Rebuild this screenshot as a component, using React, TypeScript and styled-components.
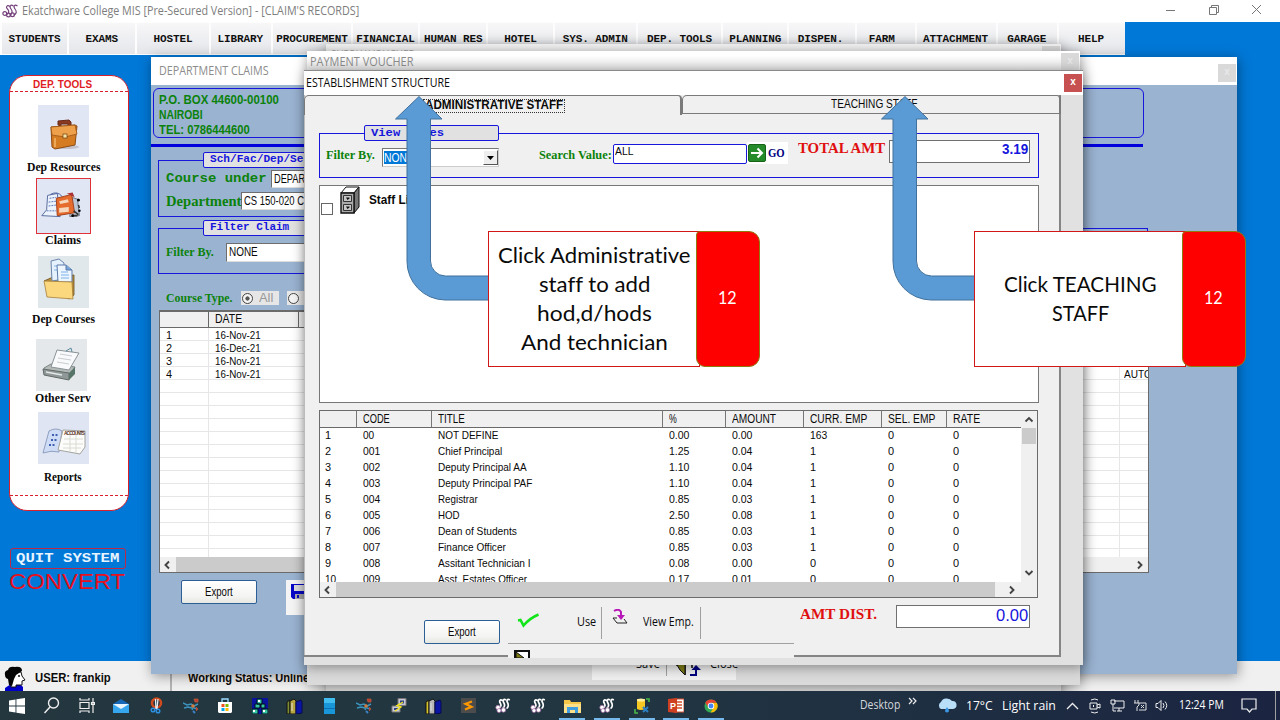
import React, { useLayoutEffect, useRef, useState } from "react";
import styled, { createGlobalStyle, css } from "styled-components";

const ui = '"Open Sans", "Noto Sans", sans-serif';
const sans = '"Liberation Sans", Arial, sans-serif';
const serif = '"Liberation Serif", "Times New Roman", serif';
const mono = '"Liberation Mono", "Courier New", monospace';
const calibri = 'Lato, "Open Sans", sans-serif';
const blue = "#1616dc";
const green = "#0b820b";

const Global = createGlobalStyle`
  * { box-sizing: border-box; }
  body { margin: 0; background: #0078d7; overflow: hidden; }
`;

/* ---------- text ---------- */
type Face = { $font?: string; $size?: number; $bold?: boolean; $color?: string };
const face = css<Face>`
  font-family: ${(p) => p.$font ?? sans};
  font-size: ${(p) => p.$size ?? 12}px;
  font-weight: ${(p) => (p.$bold ? 700 : 400)};
  font-variant-ligatures: none;
  color: ${(p) => p.$color ?? "#0a0a0a"};
  white-space: pre;
`;
const TextSlot = styled.span<Face>`
  ${face}
  display: block;
  flex: none;
  line-height: 1.2;
`;
const TextRun = styled.span`
  display: inline-block;
  transform-origin: 0 50%;
`;
type LabelProps = { w: number; font?: string; size?: number; bold?: boolean; color?: string; children: string };

/* Text condensed or widened to the width of the original bitmap face. */
function Label({ w, font, size, bold, color, children }: LabelProps) {
  const ref = useRef<HTMLSpanElement>(null);
  const [scale, setScale] = useState(1);
  useLayoutEffect(() => {
    if (ref.current && ref.current.offsetWidth) setScale(w / ref.current.offsetWidth);
  }, [w, children]);
  return (
    <TextSlot $font={font} $size={size} $bold={bold} $color={color} style={{ width: w }}>
      <TextRun ref={ref} style={{ transform: `scaleX(${scale})` }}>{children}</TextRun>
    </TextSlot>
  );
}

/* ---------- shell ---------- */
const Screen = styled.div`
  position: relative;
  width: 1280px;
  height: 720px;
  display: flex;
  flex-direction: column;
  overflow: hidden;
  background: #0078d7;
`;
const AppTitle = styled.header`
  height: 22px;
  display: flex;
  align-items: center;
  gap: 3px;
  padding-left: 2px;
  background: #fff;
`;
const Controls = styled.div`
  margin-left: auto;
  display: flex;
  gap: 31px;
  padding: 0 17px 2px 0;
`;
const MenuBar = styled.nav`
  width: 1125px;
  height: 33px;
  margin-bottom: -1px;
  display: flex;
  padding-left: 2px;
  gap: 2px;
  background: #fdfdfd;
`;
const MenuItem = styled.div<{ $w: number; $pull: number }>`
  width: ${(p) => p.$w}px;
  height: 31px;
  margin-top: 1px;
  padding-right: ${(p) => p.$pull}px;
  display: flex;
  align-items: center;
  justify-content: center;
  font: 700 11px ${mono};
  letter-spacing: -0.1px;
  color: #111;
  background: linear-gradient(#f7f7f8, #e4e6ea);
`;
const Workspace = styled.main`
  flex: 1;
  display: flex;
  flex-direction: column;
  align-items: flex-start;
  padding: 21px 0 0 9px;
`;
const ToolPanel = styled.aside`
  width: 120px;
  height: 436px;
  display: flex;
  flex-direction: column;
  align-items: center;
  border: 1px solid #d8202c;
  border-radius: 18px;
  background: #fff;
  padding-top: 2px;
`;
const PanelHeading = styled.div`
  width: 100%;
  height: 14px;
  display: flex;
  justify-content: center;
  padding-right: 13px;
  border-bottom: 1px dashed #d8202c;
`;
const Tool = styled.div<{ $top: number; $gap: number; $active?: boolean; $nudge?: number }>`
  display: flex;
  flex-direction: column;
  align-items: center;
  margin-top: ${(p) => p.$top}px;
  margin-left: -12px;
  & > svg {
    display: block;
    width: ${(p) => (p.$active ? 55 : 51)}px;
    height: ${(p) => (p.$active ? 56 : 52)}px;
    border: ${(p) => (p.$active ? "1px solid #e03038" : "none")};
    margin-bottom: ${(p) => p.$gap}px;
    margin-right: ${(p) => p.$nudge ?? 0}px;
  }
`;
const PanelFoot = styled.div`
  width: 100%;
  margin-top: 11px;
  border-top: 1px dashed #d8202c;
`;
const Quit = styled.div`
  width: 116px;
  height: 21px;
  margin: 37px 0 0 1px;
  padding-top: 2px;
  display: flex;
  align-items: center;
  justify-content: center;
  border: 1px solid #c02848;
  border-radius: 3px;
`;
const StatusBar = styled.footer`
  height: 30px;
  display: flex;
  align-items: center;
  background: #f0f0f0;
  padding: 4px 0 0 4px;
`;
const StatusCell = styled.div<{ $w: number }>`
  width: ${(p) => p.$w}px;
  height: 26px;
  display: flex;
  align-items: center;
  gap: 9px;
  border-right: 2px solid #b4b4b4;
`;
const StatusText = styled.div`
  padding-left: 16px;
`;

/* ---------- floating windows ---------- */
const Window = styled.section<{ $x: number; $y: number; $w: number; $h: number; $bg: string }>`
  position: absolute;
  left: ${(p) => p.$x}px;
  top: ${(p) => p.$y}px;
  width: ${(p) => p.$w}px;
  height: ${(p) => p.$h}px;
  display: flex;
  flex-direction: column;
  overflow: hidden;
  background: ${(p) => p.$bg};
  box-shadow: 1px 2px 12px rgba(0, 0, 0, 0.4);
`;
const WindowTitle = styled.div<{ $h: number; $pad: number; $bg?: string; $line?: boolean }>`
  flex: none;
  height: ${(p) => p.$h}px;
  display: flex;
  align-items: center;
  justify-content: space-between;
  padding: 0 1px 0 ${(p) => p.$pad}px;
  background: ${(p) => p.$bg ?? "#fff"};
  border-top: ${(p) => (p.$line ? "1px solid #8a8a8a" : "0")};
`;
const CloseBox = styled.div<{ $on?: boolean; $top?: number }>`
  width: 18px;
  height: 18px;
  margin-top: ${(p) => p.$top ?? 0}px;
  font: 700 10px/16px ${sans};
  text-align: center;
  color: ${(p) => (p.$on ? "#fff" : "#e8e8e8")};
  background: ${(p) => (p.$on ? "#c75050" : "#d9d9d9")};
`;
const Row = styled.div<{ $gap?: number; $top?: number; $left?: number; $align?: string }>`
  display: flex;
  align-items: ${(p) => p.$align ?? "center"};
  gap: ${(p) => p.$gap ?? 0}px;
  margin-top: ${(p) => p.$top ?? 0}px;
  margin-left: ${(p) => p.$left ?? 0}px;
`;
const Address = styled.div`
  width: 991px;
  height: 50px;
  margin: 3px 0 0 2px;
  padding: 4px 0 0 5px;
  border: 1.5px solid ${blue};
  border-radius: 6px;
  display: flex;
  flex-direction: column;
  gap: 0.6px;
  flex: none;
`;
const Rule = styled.div`
  flex: none;
  width: 992px;
  height: 3px;
  margin-top: 6px;
  background: #0000dd;
`;
const Group = styled.div<{ $w: number; $h: number; $top: number; $left: number }>`
  flex: none;
  width: ${(p) => p.$w}px;
  height: ${(p) => p.$h}px;
  margin: ${(p) => p.$top}px 0 0 ${(p) => p.$left}px;
  border: 1px solid ${blue};
`;
const Legend = styled.div<{ $w: number; $left: number }>`
  width: ${(p) => p.$w}px;
  height: 16px;
  margin: -9px 0 0 ${(p) => p.$left}px;
  padding-left: 6px;
  display: flex;
  align-items: center;
  border: 1px solid ${blue};
  border-radius: 2px;
  background: #e1e1e1;
`;
const Field = styled.div<{ $w: number; $h: number }>`
  width: ${(p) => p.$w}px;
  height: ${(p) => p.$h}px;
  flex: none;
  display: flex;
  align-items: center;
  padding-left: 2px;
  background: #fff;
  border: 1px solid #6e6e6e;
  border-right-color: #ddd;
  border-bottom-color: #ddd;
`;
const Chip = styled.div<{ $w: number }>`
  width: ${(p) => p.$w}px;
  height: 14px;
  display: flex;
  align-items: center;
  gap: 6px;
  padding-left: 1px;
  background: #e6e6e6;
`;
const Radio = styled.i<{ $on?: boolean }>`
  width: 11px;
  height: 11px;
  border-radius: 50%;
  border: 1.5px solid #444;
  background: ${(p) => (p.$on ? "radial-gradient(#555 0 1.8px, #f4f4f4 2.4px)" : "#f4f4f4")};
`;
const ClaimsTable = styled.div`
  flex: none;
  width: 990px;
  height: 263px;
  margin: 5px 0 0 8px;
  display: flex;
  flex-direction: column;
  background: #fff;
  border: 1px solid #6b6b6b;
  border-top-width: 2px;
`;
const ClaimsHead = styled.div`
  flex: none;
  height: 16px;
  display: grid;
  grid-template-columns: 49px 90px 1fr;
  background: #f0f0f0;
  border-bottom: 1px solid #696969;
  & > div {
    border-right: 1px solid #666;
    padding: 0 0 0 6px;
    line-height: 1;
  }
`;
const ClaimsBody = styled.div`
  flex: 1;
  min-height: 0;
  overflow: hidden;
`;
const ClaimRow = styled.div`
  height: 13px;
  display: grid;
  grid-template-columns: 49px 911px 1fr;
  border-bottom: 1px solid #e6e6e6;
  & > div {
    border-right: 1px solid #e6e6e6;
    padding-left: 6px;
    line-height: 1;
  }
  & > div:last-child { padding-left: 4px; border: 0; overflow: hidden; }
  & span { line-height: 15px; }
`;
const HScroll = styled.div<{ $end: number }>`
  flex: none;
  height: 15px;
  display: flex;
  align-items: center;
  padding: 0 ${(p) => p.$end}px 0 3px;
  background: #f0f0f0;
  & > svg:last-child { margin-left: auto; }
`;
const Thumb = styled.div<{ $w: number }>`
  width: ${(p) => p.$w}px;
  height: 15px;
  margin-left: 3px;
  background: #cbcbcb;
`;
const Button = styled.div`
  width: 76px;
  height: 24px;
  flex: none;
  display: flex;
  align-items: center;
  justify-content: center;
  border: 1.5px solid #2c5f96;
  border-radius: 2px;
  background: linear-gradient(#fff, #f4f4f2 70%, #e6e6e2);
`;
const SaveStrip = styled.div`
  width: 400px;
  height: 35px;
  margin-left: 29px;
  padding: 4px 0 0 5px;
  background: #f4f4f4;
`;

/* ---------- establishment window ---------- */
const Tabs = styled.div`
  display: flex;
  height: 20px;
  flex: none;
`;
const Tab = styled.div<{ $on?: boolean }>`
  width: ${(p) => (p.$on ? 378 : 379)}px;
  height: ${(p) => (p.$on ? 20 : 19)}px;
  display: flex;
  align-items: center;
  justify-content: ${(p) => (p.$on ? "center" : "flex-start")};
  padding-left: ${(p) => (p.$on ? 2 : 148)}px;
  border: 1px solid #7a7a7a;
  border-right-width: 2px;
  border-bottom-width: ${(p) => (p.$on ? 0 : 1)}px;
  border-radius: 5px 4px 0 0;
  background: #f0f0f0;
`;
const Focus = styled.div`
  display: flex;
  align-items: center;
  height: 14px;
  padding: 0 1px;
  border: 1px dotted #333;
`;
const TabPage = styled.div`
  width: 757px;
  height: 562px;
  display: flex;
  flex-direction: column;
  background: #f0f0f0;
  box-shadow: inset -2px -2px #858585, inset 1px 0 #bbb;
`;
const Combo = styled.div`
  width: 117px;
  height: 19px;
  display: flex;
  align-items: center;
  background: #fff;
  border: 1.5px solid #777;
  border-right-color: #ccc;
  border-bottom-color: #ccc;
`;
const Selected = styled.div`
  background: #0078d7;
  height: 13px;
  margin-left: 1px;
  line-height: 1;
  width: 32px;
`;
const Drop = styled.div`
  width: 15px;
  height: 15px;
  margin-left: auto;
  display: flex;
  align-items: center;
  justify-content: center;
  background: #eee;
  border: 1px solid #fff;
  border-right-color: #555;
  border-bottom-color: #555;
`;
const SearchField = styled.div`
  width: 134px;
  height: 20px;
  padding: 0 0 0 1px;
  background: #fff;
  border: 1px solid ${blue};
  border-radius: 2px;
`;
const Go = styled.div`
  width: 41px;
  height: 22px;
  display: flex;
  align-items: center;
  gap: 2px;
  padding-left: 1px;
  background: #fff;
`;
const Amount = styled.div<{ $w: number }>`
  width: ${(p) => p.$w}px;
  height: 23px;
  display: flex;
  justify-content: flex-end;
  align-items: flex-start;
  padding-right: 1px;
  background: #fff;
  border: 1.5px solid #707070;
`;
const Tree = styled.div`
  flex: none;
  width: 720px;
  height: 218px;
  margin: 7px 0 0 15px;
  display: flex;
  align-items: flex-start;
  background: #fff;
  border: 1.5px solid #777;
`;
const Check = styled.i`
  width: 12px;
  height: 12px;
  margin: 17px 7px 0 1px;
  border: 1.5px solid #666;
`;
const DataTable = styled.div`
  flex: none;
  width: 719px;
  height: 188px;
  margin: 7px 0 0 15px;
  display: flex;
  flex-direction: column;
  background: #fff;
  border: 1.5px solid #6b6b6b;
`;
const TableMain = styled.div`
  display: flex;
  height: 171px;
  flex: none;
`;
const Grid = styled.div`
  width: 701px;
  overflow: hidden;
`;
const cols = "37px 75px 231px 63px 78px 78px 65px 74px";
const HeadRow = styled.div`
  display: grid;
  grid-template-columns: ${cols};
  height: 17px;
  background: #f0f0f0;
  border-bottom: 1.5px solid #696969;
  & > div { border-right: 1.5px solid #777; padding: 1px 0 0 6px; }
  & > div:last-child { border-right: 0; }
`;
const DataRow = styled.div`
  display: grid;
  grid-template-columns: ${cols};
  height: 16px;
  & > div { padding: 1px 0 0 6px; }
  & > div:first-child { padding-left: 5px; }
`;
const VScroll = styled.div`
  flex: 1;
  display: flex;
  flex-direction: column;
  align-items: center;
  padding: 4px 0 4px;
  background: #f0f0f0;
  & > i { width: 14px; height: 16px; margin: 3px 0 auto; background: #cbcbcb; }
`;
const Footer = styled.div`
  display: flex;
  align-items: flex-start;
  padding-left: 120px;
  height: 60px;
`;
const ToolStrip = styled.div`
  width: 286px;
  height: 55px;
  margin: 5px 0 0 8px;
  background: #f0f0f0;
`;
const StripRow = styled.div`
  height: 41px;
  display: flex;
  align-items: flex-start;
  border-bottom: 1px solid #a0a0a0;
  padding: 4px 0 0 9px;
`;
const Separator = styled.i<{ $h?: number }>`
  width: 1px;
  height: ${(p) => p.$h ?? 32}px;
  background: #a0a0a0;
`;
const VoucherStrip = styled.div`
  width: 144px;
  height: 23px;
  margin: auto 0 5px 285px;
  display: flex;
  align-items: flex-start;
  background: #efefef;
  padding-left: 44px;
`;

/* ---------- callouts ---------- */
const Overlay = styled.div<{ $x: number }>`
  position: absolute;
  left: ${(p) => p.$x}px;
  top: 92px;
  width: 366px;
  height: 280px;
  & > svg { position: absolute; left: 0; top: 0; }
`;
const Note = styled.div`
  position: absolute;
  left: 94px;
  top: 139px;
  display: flex;
  height: 136px;
`;
const NoteText = styled.div`
  width: 212px;
  margin-right: -4px;
  display: flex;
  flex-direction: column;
  align-items: center;
  justify-content: center;
  padding: 0 0 0 1px;
  background: #fff;
  border: 1.5px solid #d01818;
  & > span { line-height: 28.8px; }
`;
const NoteNumber = styled.div`
  width: 64px;
  display: flex;
  align-items: center;
  justify-content: center;
  padding: 0 2px 1px 0;
  background: #fe0000;
  border: 1px solid #8f7a10;
  border-radius: 4px 11px 11px 9px;
`;

/* ---------- taskbar ---------- */
const Taskbar = styled.div`
  position: relative;
  z-index: 2;
  flex: none;
  height: 29px;
  display: flex;
  align-items: center;
  background: linear-gradient(90deg, #24373f, #213641 45%, #1f3042 70%, #1b2441);
`;
const Slot = styled.div<{ $on?: boolean }>`
  width: 34.7px;
  height: 29px;
  display: flex;
  align-items: center;
  justify-content: center;
  ${(p) => p.$on && css`background: linear-gradient(#76b9ed, #76b9ed) center bottom / 26px 2px no-repeat;`}
`;
const Tray = styled.div`
  flex: 1;
  display: flex;
  align-items: center;
  padding-left: 132px;
`;
const Push = styled.div<{ $n: number }>`
  margin-left: ${(p) => p.$n}px;
  display: flex;
`;

/* ---------- icons ---------- */
const Chevron = ({ dir }: { dir: "l" | "r" | "u" | "d" }) => {
  const d = { l: "M6 1.5L2.5 5L6 8.5", r: "M3 1.5L6.5 5L3 8.5", u: "M1.5 6.5L5 3L8.5 6.5", d: "M1.5 3L5 6.5L8.5 3" }[dir];
  return <svg width="10" height="10"><path d={d} fill="none" stroke="#444" strokeWidth="1.9" /></svg>;
};
const TitleLogo = () => (
  <svg width="17" height="15" viewBox="0 0 17 15">
    <g fill="none" stroke="#76407c" strokeWidth="1.2">
      <path d="M8 2.500C5 .5 3.500 3 5.500 5s1.500 5-1.500 5.500M11.500 2C8.500 0 7 2.500 9 5s1 5.500-1.500 6M15.500 2c-3-2-4.500.5-2.500 3s1.500 5.500-1.500 6" />
      <circle cx="2.800" cy="9.500" r="1.900" /><circle cx="6.500" cy="11" r="1.900" /><circle cx="10.500" cy="10.800" r="1.900" />
    </g>
  </svg>
);
const Snakes = () => (
  <svg width="16" height="15" viewBox="0 0 16 15">
    <g fill="none" stroke="#fff" strokeWidth="1.7">
      <path d="M7.500 2.500C5 1 4 3 5.200 5s1 4-1.200 5M11 2C8.500.5 7.500 2.500 8.700 4.500s1 4.500-1 6M14.800 2c-2.500-1.500-3.500.5-2.300 2.500s1 5-1 6" />
    </g>
    <g fill="#fff" stroke="#a06aa4" strokeWidth=".7">
      <circle cx="3" cy="9.500" r="2.200" /><circle cx="4" cy="12.600" r="2" /><circle cx="8.500" cy="12" r="2.200" />
    </g>
  </svg>
);
const Briefcase = () => (
  <svg viewBox="0 0 51 52"><rect width="51" height="52" fill="#e0e6f4" />
    <ellipse cx="28" cy="42" rx="13" ry="2" fill="#c3c2cc" />
    <path d="M20 20v-4l11-1 2 2v4h-3v-2h-7v2z" fill="#8a3a20" stroke="#6a2818" />
    <path d="M13 22l24-2 2 1-2 19-20 4-3-2z" fill="#d57c22" stroke="#8e4a12" />
    <path d="M13 22l24-2 2 9-12 3-13-2z" fill="#efa04a" stroke="#9c5615" strokeWidth=".8" />
    <path d="M17 33v9" stroke="#f3b96c" strokeWidth="1.5" />
    <rect x="25" y="29" width="4" height="4" fill="#f6e3a4" stroke="#704010" strokeWidth=".7" />
  </svg>
);
const ClaimsIcon = () => (
  <svg viewBox="0 0 55 56"><rect width="55" height="56" fill="#e0e6f4" />
    <path d="M11 17l10-2 3 24-19-1 5-6z" fill="#edf3fc" stroke="#54699c" />
    <path d="M13 20l7-1M12 24l8-1M12 28l8-1M10 33h10" stroke="#5676bd" strokeDasharray="2 1" />
    <path d="M14 16q7-4 12 2" fill="none" stroke="#4c62a0" />
    <path d="M36 19l6 2 2 17-10 1z" fill="#bcc6d4" stroke="#6c7484" />
    <path d="M20 20l16-4 3 19-18 3z" fill="#e56c2c" stroke="#a2401c" />
    <path d="M23 23l9-2 1 3-9 2zM23 30l10-1v5l-10 1z" fill="#f7d7bb" />
    <path d="M31 15l6-1 2 5z" fill="#a33" />
    <path d="M42 21l2 1M43 27l1 3M38 33l5 4M36 38l6 0" stroke="#333" strokeWidth="1.6" />
    <circle cx="43" cy="22" r="1.400" /><circle cx="37" cy="38" r="1.400" /><circle cx="44" cy="33" r="1.300" />
  </svg>
);
const FolderIcon = () => (
  <svg viewBox="0 0 51 52"><rect width="51" height="52" fill="#e1e8ec" />
    <path d="M6 25l9-4 21-2v20l-5 4z" fill="#b98d3c" stroke="#6b5120" strokeWidth=".8" />
    <path d="M13 5l8-2 5 4v16l-12 2z" fill="#e5f1fd" stroke="#6a84ad" />
    <path d="M16 10h6M16 14h7" stroke="#85b3e6" />
    <path d="M19 9h9l6 5v12H20z" fill="#edf6ff" stroke="#5a79ab" />
    <path d="M28 9v5h6" fill="#78a4d8" stroke="#5a79ab" />
    <path d="M23 16h7M23 19h8M23 22h8" stroke="#7ab0ea" />
    <path d="M6 25l28 1 1 17-26-2z" fill="#fbd77d" stroke="#a5803a" strokeWidth=".8" />
  </svg>
);
const ScannerIcon = () => (
  <svg viewBox="0 0 51 52"><rect width="51" height="52" fill="#e4e8eb" />
    <path d="M8 29l7-4 24 3-5 9-26-4z" fill="#b3bab8" stroke="#7c8583" />
    <path d="M7 30l26 4v7L8 36z" fill="#8f9896" stroke="#626b69" />
    <path d="M33 34l6-6v7l-6 6z" fill="#577469" />
    <path d="M21 11l22 3-10 17-18-3z" fill="#f8fafb" stroke="#8b9397" />
    <path d="M24 15l12 2M22 19l13 2M21 23l12 2" stroke="#c8cdd0" />
    <path d="M30 12l5-3 1 4" fill="none" stroke="#5a8a9c" />
    <path d="M10 33l16 3" stroke="#e4e8e8" strokeWidth="1.5" />
  </svg>
);
const AccountsIcon = () => (
  <svg viewBox="0 0 51 52"><rect width="51" height="52" fill="#dfe5f3" />
    <path d="M11 19q7-4 13 0l-3 21q-8-2-16 1z" fill="#cfdcf6" stroke="#8f9fbf" />
    <path d="M14 23h6M13 28h6M11 33h7" stroke="#3f60b2" strokeWidth="2" strokeDasharray="2 1.5" />
    <path d="M25 18l22 1v16l-5 7-22-4z" fill="#fcfcfa" stroke="#a4a4a0" />
    <path d="M26 27h19M25 32h20M25 36h18M32 23v17M38 23v18" stroke="#dbdbd4" />
    <text x="26" y="23" fontFamily="Liberation Sans" fontWeight="700" fontSize="4.8" fill="#5c3324" textLength="21">ACCOUNTS</text>
  </svg>
);
const UserIcon = () => (
  <svg width="22" height="25" viewBox="0 0 22 25">
    <path d="M1 22l6-4h9l3 3v4H1z" fill="#0000c8" />
    <path d="M6 6h11l1 4 3 4-3 1v4h-6v2H7z" fill="#fff" stroke="#111" />
    <path d="M1 9Q0 5 4 4Q5 0 11 1q7-1 7 4l-3 2-3 2-2 4-2 7-3-1-1-6Q1 12 1 9z" fill="#050505" />
    <path d="M14 10h2" stroke="#111" strokeWidth="1.5" />
  </svg>
);
const Cabinet = () => (
  <svg width="20" height="28" viewBox="0 0 20 28">
    <path d="M1 7l5-6h13l-5 6z" fill="#fff" stroke="#111" />
    <path d="M14 7l5-6v20l-5 6z" fill="#777" stroke="#111" />
    <path d="M1 7h13v20H1z" fill="#aaa" stroke="#111" strokeWidth="1.4" />
    <path d="M3.500 9.500h8v6h-8zM3.500 18.500h8v6h-8z" fill="#c6c6c6" stroke="#333" />
    <path d="M6 11.500h3.500v1L7.500 14zM6 20.500h3.500v1L7.500 23z" fill="#111" />
  </svg>
);
const Floppy = () => (
  <svg width="17" height="15"><path d="M0 0h17v15H2l-2-2z" fill="#0808c8" /><path d="M3 1h11v6H3z" fill="#ddd" /><path d="M4 10h9v5H4z" fill="#aaa" /><path d="M6 11h2v3H6z" fill="#0808c8" /></svg>
);
const DoorIcon = () => (
  <svg width="28" height="14" viewBox="0 0 28 14">
    <path d="M0 2h9v-2h7v5M9 0v12" fill="none" stroke="#111" strokeWidth="1.6" />
    <path d="M9 0v12L4 7 1 2z" fill="#7d7b16" stroke="#111" />
    <path d="M14 12h6V6" fill="none" stroke="#000080" strokeWidth="2" /><path d="M15.500 7L20 2l5 5z" fill="#000080" />
  </svg>
);
const WinLogo = () => <svg width="16" height="16"><path d="M0 2.400l6.500-1v6.100H0zM7.400 1.300L16 0v7.500H7.400zM0 8.400h6.500v6.100L0 13.600zM7.400 8.400H16V16l-8.600-1.300z" fill="#fff" /></svg>;
const Search = () => <svg width="16" height="17"><circle cx="9.5" cy="6" r="5" fill="none" stroke="#eee" strokeWidth="1.4" /><path d="M6 10l-5.500 6" stroke="#eee" strokeWidth="1.5" /></svg>;
const TaskView = () => <svg width="16" height="15"><path d="M1 0v2h9V0M1 15v-2h9v2M1 4.500h9v6H1zM14 0v15M12.500 4.500h3v2h-3z" fill="none" stroke="#eee" strokeWidth="1.2" /></svg>;
const Mail = () => <svg width="16" height="14"><path d="M0 5l8-5 8 5z" fill="#1769b8" /><path d="M0 5h16v9H0z" fill="#36a7ee" /><path d="M0 5l8 5 8-5z" fill="#e9f6ff" /></svg>;
const Snip = () => <svg width="14" height="17"><circle cx="7.5" cy="6" r="4.500" fill="none" stroke="#cf4a1f" strokeWidth="2.600" /><path d="M6.500 2l.5 10M9 2l-1 10" stroke="#e8eef2" strokeWidth="1.3" /><circle cx="4" cy="13" r="1.800" fill="none" stroke="#2d8fe0" strokeWidth="1.5" /><circle cx="9" cy="14" r="1.800" fill="none" stroke="#2d8fe0" strokeWidth="1.5" /></svg>;
const Bug = () => <svg width="16" height="16"><path d="M0 5l4 2 4-1 3 2M1 10l4-1 4 1M9 12l2-4 4-2M11 10l3 1" stroke="#3b94be" strokeWidth="1.5" fill="none" /><path d="M11 1h4v3h-3zM13 9l2 2-2 2" fill="#c33a34" stroke="#b55a36" strokeWidth=".8" /><circle cx="10" cy="8" r="1.8" fill="#cf7a3a" /><path d="M10 13l2 2" stroke="#3e83c4" strokeWidth="2" /></svg>;
const Store = () => <svg width="16" height="16"><path d="M5 4V1h6v3" fill="none" stroke="#9ddcff" strokeWidth="1.3" /><path d="M1 4h14v10l-1 1H2l-1-1z" fill="#fff" /><path d="M4.500 6h3v3h-3z" fill="#f25022" /><path d="M8.500 6h3v3h-3z" fill="#7fba00" /><path d="M4.500 10h3v3h-3z" fill="#00a4ef" /><path d="M8.500 10h3v3h-3z" fill="#ffb900" /></svg>;
const Blocks = () => <svg width="16" height="16"><path d="M0 0h16v16H0z" fill="#0a12a0" /><path d="M5 1h5v5H5zM3 6h5v4H3zM9 6h4v4H9zM0 11h6v5H0zM10 11h6v5h-6z" fill="#35c4a4" stroke="#02101c" /><path d="M6 2h2v2H6zM1 12h2v2H1zM11 12h2v2h-2z" fill="#fff" /></svg>;
const Books = ({ c = "#7d8d32" }: { c?: string }) => <svg width="17" height="16"><path d="M1 4l3-2v14H1z" fill={c} stroke="#111" /><path d="M4 3l4-2 2 2v13H4z" fill={c === "#7d8d32" ? "#b7a53e" : "#b7b7b7"} stroke="#111" /><path d="M10 4l5-2 1 2v11l-6 1z" fill="#0b16a4" stroke="#060a50" /><path d="M6 5v8" stroke="#dedede" /></svg>;
const Panel = () => <svg width="11" height="16"><path d="M0 0h11v16H0z" fill="#1996d8" /><path d="M0 0h11v5H0z" fill="#42bdf0" /><path d="M0 10.500h11" stroke="#0c70b2" /></svg>;
const Putty = () => <svg width="16" height="16"><path d="M7 .5h8v7H7zM1 8h8v6H1z" fill="#c8c8d4" stroke="#777" /><path d="M9 2.500h4v3H9zM3 10h4v2H3z" fill="#2b3f84" /><path d="M12 4L6 7.500l4 1.500-6 4" fill="none" stroke="#f5e51b" strokeWidth="1.400" /></svg>;
const Sublime = () => <svg width="15" height="15"><path d="M0 0h15v15H0z" fill="#4c4c4c" /><path d="M11 3.500L4.500 5.800 10.500 8.800 4 11.500" fill="none" stroke="#ff9800" strokeWidth="2.200" /></svg>;
const Folder = () => <svg width="17" height="14"><path d="M0 1h6l1 2h10v11H0z" fill="#f4c64a" /><path d="M0 5h17v9H0z" fill="#ffe08a" /><path d="M3 8h11v6h-3v-3H6v3H3z" fill="#3f9de0" /></svg>;
const SqlTool = () => <svg width="16" height="16"><path d="M3 1h8v10q-4 2-8 0z" fill="#f5c823" /><ellipse cx="7" cy="2" rx="4" ry="1.6" fill="#fff1a0" /><path d="M1 11v4h3M12 1h3v3" fill="none" stroke="#49b84a" strokeWidth="1.6" /><path d="M9 9l5 5M14 9l-5 5" stroke="#2a7fc6" strokeWidth="2" /></svg>;
const Ppt = () => <svg width="16" height="15"><path d="M6 1h10v13H6z" fill="#fff" stroke="#d35230" /><path d="M9 4h5M9 7h5M9 10h5" stroke="#d35230" strokeWidth="1.4" /><path d="M0 1l9-1v15l-9-1z" fill="#cf3f22" /><text x="2" y="11" fontFamily="Liberation Sans" fontWeight="700" fontSize="9" fill="#fff">P</text></svg>;
const Chrome = () => <svg width="14" height="14" viewBox="0 0 16 16"><circle cx="8" cy="8" r="7.5" fill="#34a853" /><path d="M1.500 4.300A7.500 7.500 0 0 1 14.500 4.300L8 4.300 5 9.700z" fill="#ea4335" /><path d="M14.700 4.500A7.500 7.500 0 0 1 7.500 15.500L11 9.800 8 4.500z" fill="#fbbc05" /><circle cx="8" cy="8" r="3.700" fill="#fff" /><circle cx="8" cy="8" r="2.800" fill="#4285f4" /></svg>;

/* ---------- data ---------- */
const menus: [string, number, number?][] = [
  ["STUDENTS", 65], ["EXAMS", 66], ["HOSTEL", 73], ["LIBRARY", 60, 2], ["PROCUREMENT", 78], ["FINANCIAL", 66],
  ["HUMAN RES", 66], ["HOTEL", 65], ["SYS. ADMIN", 81], ["DEP. TOOLS", 84], ["PLANNING", 64], ["DISPEN.", 66, 3],
  ["FARM", 58, 8], ["ATTACHMENT", 80, 2], ["GARAGE", 59, 2], ["HELP", 66, 2],
];
const staff: [string, string, number, string, string, string][] = [
  ["00", "NOT DEFINE", 60, "0.00", "0.00", "163"],
  ["001", "Chief Principal", 64, "1.25", "0.04", "1"],
  ["002", "Deputy Principal AA", 89, "1.10", "0.04", "1"],
  ["003", "Deputy Principal PAF", 94, "1.10", "0.04", "1"],
  ["004", "Registrar", 40, "0.85", "0.03", "1"],
  ["005", "HOD", 22, "2.50", "0.08", "1"],
  ["006", "Dean of Students", 79, "0.85", "0.03", "1"],
  ["007", "Finance Officer", 68, "0.85", "0.03", "1"],
  ["008", "Assitant Technician I", 93, "0.08", "0.00", "0"],
  ["009", "Asst. Estates Officer", 89, "0.17", "0.01", "0"],
];
const heads: [string, number][] = [["CODE", 27], ["TITLE", 27], ["%", 8], ["AMOUNT", 44], ["CURR. EMP", 57], ["SEL. EMP", 47], ["RATE", 27]];
const claims = ["16-Nov-21", "16-Dec-21", "16-Nov-21", "16-Nov-21"];
const digits = (s: string) => [...s].reduce((n, c) => n + (c === "." ? 3 : 5.7), 0);

const Num = ({ children }: { children: string }) => <Label w={digits(children)} size={11.5}>{children}</Label>;

function ClaimsWindow() {
  return (
    <Window $x={151} $y={57} $w={1086} $h={617} $bg="#9ab3d1">
      <WindowTitle $h={28} $pad={8}>
        <Label w={110} font={ui} color="#8c8c8c">DEPARTMENT CLAIMS</Label>
        <CloseBox $top={4}>x</CloseBox>
      </WindowTitle>
      <Address>
        <Label w={120} bold color={green}>P.O. BOX 44600-00100</Label>
        <Label w={44} bold color={green}>NAIROBI</Label>
        <Label w={91} bold color={green}>TEL: 0786444600</Label>
      </Address>
      <Rule />
      <Group $w={900} $h={57} $top={13} $left={7}>
        <Legend $w={300} $left={44}><Label w={93} font={mono} size={11} bold color={blue}>Sch/Fac/Dep/Se</Label></Legend>
        <Row $left={7} $top={2} $gap={4}>
          <Label w={101} font={mono} size={13} bold color={green}>Course under</Label>
          <Field $w={200} $h={18}><Label w={37} size={12}>DEPART</Label></Field>
        </Row>
        <Row $left={7} $top={4}>
          <Label w={75} font={serif} size={15} bold color={green}>Department</Label>
          <Field $w={200} $h={18}><Label w={60} size={12}>CS 150-020 C</Label></Field>
        </Row>
      </Group>
      <Group $w={990} $h={46} $top={11} $left={7}>
        <Legend $w={300} $left={44}><Label w={79} font={mono} size={11} bold color={blue}>Filter Claim</Label></Legend>
        <Row $left={7} $top={7} $gap={12}>
          <Label w={48} font={serif} bold color={green}>Filter By.</Label>
          <Field $w={250} $h={19}><Label w={29} size={12}>NONE</Label></Field>
        </Row>
      </Group>
      <Row $left={15} $top={17} $gap={8}>
        <Label w={67} font={serif} bold color={green}>Course Type.</Label>
        <Chip $w={38}><Radio $on /><Label w={14} color="#999">All</Label></Chip>
        <Chip $w={60}><Radio /></Chip>
      </Row>
      <ClaimsTable>
        <ClaimsHead><div /><div><Label w={27} size={12}>DATE</Label></div><div /></ClaimsHead>
        <ClaimsBody>
          {Array.from({ length: 18 }, (_, i) => (
            <ClaimRow key={i}>
              <div>{claims[i] && <Num>{String(i + 1)}</Num>}</div>
              <div>{claims[i] && <Label w={46} size={11.5}>{claims[i]}</Label>}</div>
              <div>{i === 3 && <Label w={28} size={11.5}>AUTO</Label>}</div>
            </ClaimRow>
          ))}
        </ClaimsBody>
        <HScroll $end={3}><Chevron dir="l" /><Thumb $w={880} /><Chevron dir="r" /></HScroll>
      </ClaimsTable>
      <Row $left={30} $top={7} $align="flex-start">
        <Button><Label w={28} size={12}>Export</Label></Button>
        <SaveStrip><Floppy /></SaveStrip>
      </Row>
    </Window>
  );
}

function EstablishmentWindow() {
  return (
    <Window $x={304} $y={70} $w={779} $h={595} $bg="#e1e1e1">
      <WindowTitle $h={25} $pad={2} $line>
        <Label w={144} font={ui}>ESTABLISHMENT STRUCTURE</Label>
        <CloseBox $on $top={-1}>x</CloseBox>
      </WindowTitle>
      <TabPage>
        <Tabs>
          <Tab $on><Focus><Label w={138} size={12} bold>ADMINISTRATIVE STAFF</Label></Focus></Tab>
          <Tab><Label w={86} size={12}>TEACHING STAFF</Label></Tab>
        </Tabs>
        <Group $w={720} $h={45} $top={18} $left={15}>
          <Legend $w={135} $left={44}><Label w={73} font={mono} size={11.5} bold color={blue}>View types</Label></Legend>
          <Row $left={6} $top={-1} $align="flex-start">
            <Row $top={8}><Label w={49} font={serif} bold color={green}>Filter By.</Label></Row>
            <Row $top={8} $left={7}>
              <Combo>
                <Selected><Label w={30} size={12} color="#fff">NONE</Label></Selected>
                <Drop><svg width="7" height="4"><path d="M0 0h7L3.500 4z" /></svg></Drop>
              </Combo>
            </Row>
            <Row $top={8} $left={40}><Label w={73} font={serif} bold color={green}>Search Value:</Label></Row>
            <Row $top={4} $left={1}><SearchField><Label w={18} size={11.5}>ALL</Label></SearchField></Row>
            <Row $top={2}>
              <Go>
                <svg width="18" height="18"><rect x=".5" y=".5" width="17" height="17" rx="1.5" fill="#258a2a" stroke="#176419" /><path d="M3 9h11M9.500 4.500L14 9l-4.500 4.500" fill="none" stroke="#fff" strokeWidth="2" /></svg>
                <Label w={17} font={serif} bold size={12} color="#000080">GO</Label>
              </Go>
            </Row>
            <Row $top={-1} $left={10}><Label w={87} font={serif} bold size={15} color="#e01010">TOTAL AMT</Label></Row>
            <Row $top={0} $left={4}><Amount $w={141}><Label w={26} bold size={14} color={blue}>3.19</Label></Amount></Row>
          </Row>
        </Group>
        <Tree>
          <Check />
          <Cabinet />
          <Row $left={9} $top={7}><Label w={50} bold size={12}>Staff List</Label></Row>
        </Tree>
        <DataTable>
          <TableMain>
            <Grid>
              <HeadRow><div />{heads.map(([h, w]) => <div key={h}><Label w={w} size={12}>{h}</Label></div>)}</HeadRow>
              {staff.map(([code, title, w, pct, amt, emp], i) => (
                <DataRow key={code}>
                  <div><Num>{String(i + 1)}</Num></div>
                  <div><Num>{code}</Num></div>
                  <div><Label w={w} size={11.5}>{title}</Label></div>
                  <div><Num>{pct}</Num></div>
                  <div><Num>{amt}</Num></div>
                  <div><Num>{emp}</Num></div>
                  <div><Num>0</Num></div>
                  <div><Num>0</Num></div>
                </DataRow>
              ))}
            </Grid>
            <VScroll><Chevron dir="u" /><i /><Chevron dir="d" /></VScroll>
          </TableMain>
          <HScroll $end={20}><Chevron dir="l" /><Thumb $w={659} /><Chevron dir="r" /></HScroll>
        </DataTable>
        <Footer>
          <Row $top={22}><Button><Label w={28} size={12}>Export</Label></Button></Row>
          <ToolStrip>
            <StripRow>
              <Row $top={6}><svg width="23" height="17"><path d="M1 7.500l2.500-.5 3 5.500Q13 5 21.500 1.500" fill="none" stroke="#13e51b" strokeWidth="2.600" /></svg></Row>
              <Row $top={8} $left={37}><Label w={19} font={ui} size={12}>Use</Label></Row>
              <Row $left={5}><Separator /></Row>
              <Row $top={2} $left={10}>
                <svg width="16" height="16"><path d="M2 2q5-3 7 1v5" fill="none" stroke="#b818b8" strokeWidth="2" /><path d="M5 6h8l-4 5z" fill="#b818b8" /><path d="M5 9l-4 0 4 5h10l-3-4" fill="none" stroke="#222" /></svg>
              </Row>
              <Row $top={8} $left={15}><Label w={51} font={ui} size={12}>View Emp.</Label></Row>
              <Row $left={6}><Separator /></Row>
            </StripRow>
            <Row $left={6} $top={6}><svg width="16" height="8"><path d="M1 8V1h14v7" fill="#fff" stroke="#111" strokeWidth="2" /><path d="M2 8V2l8 6z" fill="#7d7b16" stroke="#111" /></svg></Row>
          </ToolStrip>
          <Row $top={7} $left={6}><Label w={77} font={serif} bold size={15} color="#e01010">AMT DIST.</Label></Row>
          <Row $top={7} $left={19}><Amount $w={134}><Label w={32} size={16} color={blue}>0.00</Label></Amount></Row>
        </Footer>
      </TabPage>
    </Window>
  );
}

function Callout({ x, lines }: { x: number; lines: [string, number][] }) {
  return (
    <Overlay $x={x}>
      <svg width="100" height="212">
        <path d="M25 4.500L48 27H36.500V169A15 15 0 0 0 51.500 184H99V208H51A38.500 38.500 0 0 1 13 169V27H1.500Z" fill="#5b9bd5" stroke="#41719c" strokeWidth="1" />
      </svg>
      <Note>
        <NoteText>{lines.map(([t, w]) => <Label key={t} w={w} font={calibri} size={22}>{t}</Label>)}</NoteText>
        <NoteNumber><Label w={19} font={calibri} size={17} color="#fff">12</Label></NoteNumber>
      </Note>
    </Overlay>
  );
}

const taskIcons: [React.ReactNode, boolean?][] = [
  [<Search />], [<TaskView />], [<Mail />], [<Snip />], [<Bug />], [<Store />], [<Blocks />], [<Books />], [<Panel />], [<Bug />],
  [<Putty />], [<Books c="#d5c42a" />], [<Sublime />], [<Snakes />], [<Snakes />],
  [<Folder />, true], [<Snakes />, true], [<SqlTool />, true], [<Ppt />, true], [<Chrome />, true],
];

export default function App() {
  return (
    <Screen>
      <Global />
      <AppTitle>
        <TitleLogo />
        <Label w={337} font={ui} color="#7d7d7d">Ekatchware College MIS [Pre-Secured Version] - [CLAIM'S RECORDS]</Label>
        <Controls>
          <svg width="12" height="12"><path d="M1 6.500h9" stroke="#777" /></svg>
          <svg width="12" height="12"><path d="M1.500 3.500h7v7h-7zM3.500 3V1.500h7v7H9" fill="none" stroke="#777" /></svg>
          <svg width="12" height="12"><path d="M1 1l9 9M10 1L1 10" stroke="#777" /></svg>
        </Controls>
      </AppTitle>
      <MenuBar>{menus.map(([m, w, pull]) => <MenuItem key={m} $w={w} $pull={pull ?? 0}>{m}</MenuItem>)}</MenuBar>
      <Workspace>
        <ToolPanel>
          <PanelHeading><Label w={59} size={10.5} bold color="#e01c24">DEP. TOOLS</Label></PanelHeading>
          <Tool $top={13} $gap={3}><Briefcase /><Label w={73} font={serif} bold>Dep Resources</Label></Tool>
          <Tool $top={4} $gap={-1} $active><ClaimsIcon /><Label w={36} font={serif} bold>Claims</Label></Tool>
          <Tool $top={8} $gap={4}><FolderIcon /><Label w={63} font={serif} bold>Dep Courses</Label></Tool>
          <Tool $top={13} $gap={0} $nudge={3}><ScannerIcon /><Label w={56} font={serif} bold>Other Serv</Label></Tool>
          <Tool $top={6} $gap={6}><AccountsIcon /><Label w={38} font={serif} bold>Reports</Label></Tool>
          <PanelFoot />
        </ToolPanel>
        <Quit><Label w={104} font={mono} size={12.5} bold color="#e8f4ff">QUIT SYSTEM</Label></Quit>
        <Label w={116} size={22} color="#e8101c">CONVERT</Label>
      </Workspace>
      <StatusBar>
        <StatusCell $w={168}><UserIcon /><Label w={76} bold size={12}>USER: frankip</Label></StatusCell>
        <StatusText><Label w={124} bold size={12}>Working Status: Unline.</Label></StatusText>
      </StatusBar>

      <ClaimsWindow />
      <Window $x={326} $y={44} $w={735} $h={660} $bg="#dedede">
        <WindowTitle $h={22} $pad={5} $bg="linear-gradient(#f4f4f4, #e6e6e6)">
          <Label w={84} font={ui} color="#aaa">SUPPLY VOUCHER</Label>
          <CloseBox />
        </WindowTitle>
      </Window>
      <Window $x={307} $y={51} $w={773} $h={634} $bg="#dadada">
        <WindowTitle $h={22} $pad={3} $bg="linear-gradient(#fff 20%, #dcdcdc)">
          <Label w={103} font={ui} color="#8c8c8c">PAYMENT VOUCHER</Label>
          <CloseBox>x</CloseBox>
        </WindowTitle>
        <VoucherStrip>
          <Label w={24} font={ui} size={12}>Save</Label>
          <Row $left={6}><Separator $h={19} /></Row>
          <Row $left={9} $top={6}><DoorIcon /></Row>
          <Row $left={6}><Label w={28} font={ui} size={12}>Close</Label></Row>
        </VoucherStrip>
      </Window>
      <EstablishmentWindow />
      <Callout x={394} lines={[["Click Administrative", 193], ["staff to add", 111], ["hod,d/hods", 115], ["And technician", 147]]} />
      <Callout x={880} lines={[["Click TEACHING", 153], ["STAFF", 57]]} />

      <Taskbar>
        <Slot><WinLogo /></Slot>
        {taskIcons.map(([icon, on], i) => <Slot key={i} $on={on}>{icon}</Slot>)}
        <Tray>
          <Label w={40} font={ui} size={12} color="#d5d9de">Desktop</Label>
          <Push $n={8}><svg width="9" height="20"><path d="M1 2l3 3-3 3M5 2l3 3-3 3" fill="none" stroke="#eee" strokeWidth="1.200" /></svg></Push>
          <Push $n={20}><svg width="20" height="16"><path d="M4 11a4 4 0 0 1 0-7 6 5 0 0 1 11-1 4 4 0 0 1 1 8z" fill="#b9def8" /><path d="M10 9q-4 5 0 5.500 4-.5 0-5.500z" fill="#3a96e4" /></svg></Push>
          <Push $n={9}><Label w={27} font={ui} size={13} color="#fff">17°C</Label></Push>
          <Push $n={9}><Label w={54} font={ui} size={13} color="#fff">Light rain</Label></Push>
          <Push $n={10}><svg width="13" height="8"><path d="M1 7l5.500-5.500L12 7" fill="none" stroke="#eee" strokeWidth="1.300" /></svg></Push>
          <Push $n={10}><svg width="12" height="16"><path d="M2 2q4-2 7 0M2 14q4 2 7 0M1 5h7v6H1zM8 7l3-1v4l-3-1M4.500 7v2" fill="none" stroke="#eee" /></svg></Push>
          <Push $n={9}><svg width="15" height="13"><path d="M4 2h10v7H4M1 1h4v4H1zM3 5v7h3M9 9v3M7 12h5" fill="none" stroke="#eee" /></svg></Push>
          <Push $n={8}><svg width="14" height="13"><path d="M2 1v3M5 1v3M1 4h5v2L4 8v4M6 4h7v7H6M8 6l3 3M11 6L8 9" fill="none" stroke="#ddd" /></svg></Push>
          <Push $n={8}><svg width="14" height="13"><path d="M1 4.500h2l3-3v10l-3-3H1zM8 4q2 2.500 0 5M10 2.500q3.500 4 0 8" fill="none" stroke="#eee" /></svg></Push>
          <Push $n={10}><Label w={45} font={ui} size={12} color="#fff">12:24 PM</Label></Push>
          <Push $n={17}><svg width="16" height="15"><path d="M1 1h14v10h-4l-2.500 3L6 11H1z" fill="none" stroke="#eee" strokeWidth="1.200" /></svg></Push>
          <Push $n={18}><Separator $h={29} /></Push>
        </Tray>
      </Taskbar>
    </Screen>
  );
}
